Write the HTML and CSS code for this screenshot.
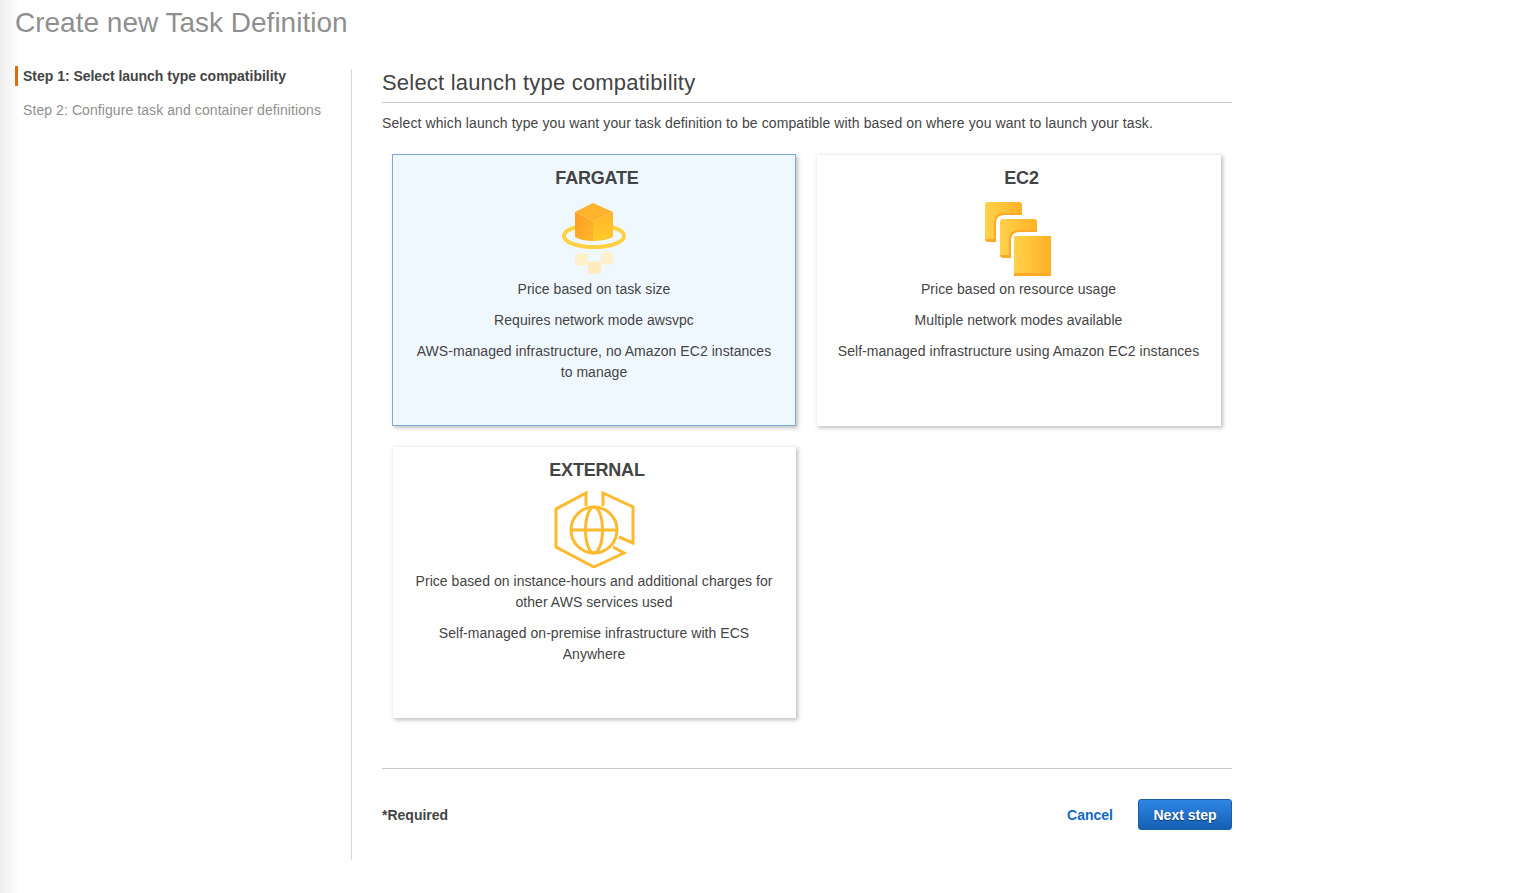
FILE: index.html
```html
<!DOCTYPE html>
<html lang="en">
<head>
    <meta charset="UTF-8">
    <meta name="viewport" content="width=device-width, initial-scale=1.0">
    <title>Create new Task Definition</title>
    <link rel="stylesheet" href="styles.css">
</head>
<body>

<h1 class="page-title">Create new Task Definition</h1>

<div class="wizard">
    <!-- Steps -->
    <div class="steps">
        <div class="step step-active">Step 1: Select launch type compatibility</div>
        <div class="step">Step 2: Configure task and container definitions</div>
    </div>

    <div class="content">
        <h2 class="section-title">Select launch type compatibility</h2>
        <p class="section-desc">Select which launch type you want your task definition to be compatible with based on where you want to launch your task.</p>

        <div class="cards">
            <div class="card card-selected">
                <h3 class="card-title">FARGATE</h3>
                <svg class="card-icon" width="70" height="78" viewBox="0 0 70 78">
                    <defs>
                        <linearGradient id="cubeLeft" x1="0" y1="0" x2="1" y2="1">
                            <stop offset="0" stop-color="#ff9c23"/>
                            <stop offset="1" stop-color="#ffb82b"/>
                        </linearGradient>
                        <linearGradient id="cubeRight" x1="0" y1="0" x2="0" y2="1">
                            <stop offset="0" stop-color="#ffb62a"/>
                            <stop offset="1" stop-color="#ffcb2a"/>
                        </linearGradient>
                    </defs>
                    <ellipse cx="35" cy="38" rx="30" ry="11" fill="none" stroke="#ffd040" stroke-width="4"/>
                    <path d="M34 23 L54 14 L54 39 Q46 43 34 43 Z" fill="url(#cubeRight)"/>
                    <path d="M16 14 L34 23 L34 43 Q23 43 16 39 Z" fill="url(#cubeLeft)"/>
                    <path d="M16 14 L34 5 L54 14 L34 23 Z" fill="#ffb22b"/>
                    <path d="M16 56 L22.5 55 L29 56 L29 67 L22.5 68 L16 67 Z" fill="#fff0cc"/>
                    <path d="M42 55 L48 54 L54 55 L54 66 L48 67 L42 66 Z" fill="#fff0cc"/>
                    <path d="M29 64 L35.5 63 L42 64 L42 75 L35.5 76 L29 75 Z" fill="#ffebbd"/>
                </svg>
                <p>Price based on task size</p>
                <p>Requires network mode awsvpc</p>
                <p>AWS-managed infrastructure, no Amazon EC2 instances to manage</p>
            </div>

            <div class="card">
                <h3 class="card-title">EC2</h3>
                <svg class="card-icon" width="70" height="78" viewBox="0 0 70 78">
                    <defs>
                        <linearGradient id="ec2Fill" x1="0" y1="0" x2="1" y2="0">
                            <stop offset="0" stop-color="#ffd24a"/>
                            <stop offset="1" stop-color="#ffb125"/>
                        </linearGradient>
                    </defs>
                    <path d="M1 7 Q1 4 4 4 L35 4 Q38 4 38 7 L38 17 L20 17 Q12 17 12 25 L12 44 L5 44 Q1 44 1 40 Z" fill="url(#ec2Fill)"/>
                    <path d="M20 15 L38 15 L38 17 L20 17 Q12 17 12 25 L12 44 L5 44 Q1 44 1 41 L10 41 L10 25 Q10 15 20 15 Z" fill="#ffa92b"/>
                    <path d="M16 24 Q16 21 19 21 L50 21 Q53 21 53 24 L53 34 L35 34 Q27 34 27 42 L27 60 L20 60 Q16 60 16 56 Z" fill="url(#ec2Fill)"/>
                    <path d="M35 32 L53 32 L53 34 L35 34 Q27 34 27 42 L27 60 L20 60 Q16 60 16 57 L25 57 L25 42 Q25 32 35 32 Z" fill="#ffa92b"/>
                    <rect x="30" y="38" width="37" height="40" fill="url(#ec2Fill)"/>
                    <rect x="30" y="75" width="37" height="3" fill="#ffa92b"/>
                </svg>
                <p>Price based on resource usage</p>
                <p>Multiple network modes available</p>
                <p>Self-managed infrastructure using Amazon EC2 instances</p>
            </div>

            <div class="card">
                <h3 class="card-title">EXTERNAL</h3>
                <svg class="card-icon" width="82" height="78" viewBox="0 0 82 78" fill="none" stroke="#ffb92e" stroke-width="3">
                    <path d="M33 16 L33 3 L3 19 L3 57 L41 77 L71 63 L60 57"/>
                    <path d="M50 16 L50 3 L80 17 L80 53 L66 47"/>
                    <circle cx="41" cy="40" r="23"/>
                    <ellipse cx="41" cy="40" rx="8.5" ry="23"/>
                    <path d="M18 40 L64 40"/>
                </svg>
                <p>Price based on instance-hours and additional charges for other AWS services used</p>
                <p>Self-managed on-premise infrastructure with ECS Anywhere</p>
            </div>
        </div>

        <div class="actions">
            <span class="required">*Required</span>
            <a class="cancel" href="#">Cancel</a>
            <button class="next" type="button">Next step</button>
        </div>
    </div>
</div>

</body>
</html>
```

FILE: styles.css
```css
body {
    font-family: "Liberation Sans", Arial, sans-serif;
    margin: 0;
    color: #444;
    font-size: 14px;
    background: linear-gradient(to right, #eeeeee, #ffffff 20px);
}
.page-title {
    font-size: 28px;
    font-weight: normal;
    color: #8f8f8f;
    margin: 0;
    padding: 6px 0 30px 15px;
    line-height: 33px;
}
.wizard {
    display: flex;
    padding-left: 15px;
}
.steps {
    width: 336px;
    height: 791px;
    border-right: 1px solid #d5d5d5;
}
.step {
    color: #8f8f8f;
    padding-left: 8px;
    line-height: 20px;
    margin-bottom: 14px;
    letter-spacing: 0.08px;
}
.step-active {
    color: #444;
    font-weight: bold;
    border-left: 3px solid #dd6b10;
    padding-left: 5px;
    margin-top: -3px;
    letter-spacing: -0.02px;
}
.content {
    width: 850px;
    margin-left: 30px;
}
.section-title {
    font-size: 22px;
    font-weight: normal;
    color: #444;
    margin: 0;
    line-height: 28px;
    padding-bottom: 5px;
    border-bottom: 1px solid #c8c8c8;
    letter-spacing: 0.2px;
}
.section-desc {
    margin: 0;
    line-height: 20px;
    padding-top: 10px;
    height: 41px;
    letter-spacing: 0.1px;
}
.cards {
    display: grid;
    grid-template-columns: 404px 405px;
    gap: 20px;
    padding: 0 0 50px 10px;
    border-bottom: 1px solid #c8c8c8;
}
.card {
    height: 272px;
    box-sizing: border-box;
    background: #fff;
    background-clip: padding-box;
    border: solid transparent;
    border-width: 1px 0 0 1px;
    padding: 12px 20px 0 19px;
    text-align: center;
    box-shadow: 2px 2px 4px rgba(0, 0, 0, 0.25);
    line-height: 21px;
}
.card-selected {
    background: #f0f8ff;
    border: 1px solid #7daadb;
    padding: 12px 19px 0;
}
.card p {
    margin: 0 0 10px;
    letter-spacing: 0.05px;
}
.card-title {
    font-size: 18px;
    margin: 0 -6px 0 0;
    line-height: 22px;
    letter-spacing: -0.2px;
}
.card-icon {
    display: block;
    margin: 9px auto 3px;
}
.actions {
    display: flex;
    align-items: center;
    margin-top: 30px;
}
.required {
    font-weight: bold;
    flex: 1;
}
.cancel {
    color: #0f69c4;
    font-weight: bold;
    text-decoration: none;
    margin-right: 25px;
}
.next {
    width: 94px;
    height: 31px;
    font: bold 14px "Liberation Sans", Arial, sans-serif;
    color: #fff;
    background: linear-gradient(#2f86e4, #155fb4);
    border: 1px solid #1a5fa8;
    border-radius: 3px;
    text-shadow: 0 1px 1px rgba(0, 0, 0, 0.5);
    cursor: pointer;
}
```
